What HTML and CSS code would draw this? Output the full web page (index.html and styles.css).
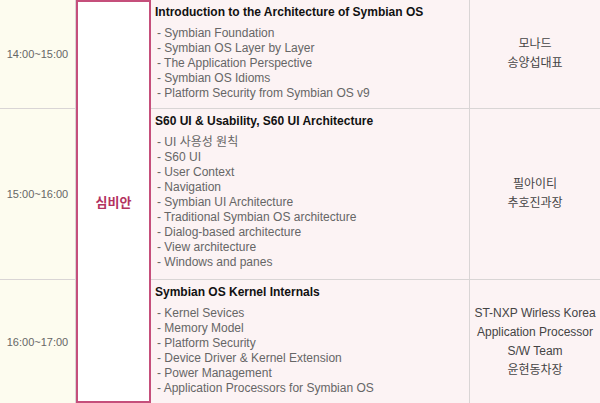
FILE: index.html
```html
<!DOCTYPE html>
<html lang="ko">
<head>
<meta charset="utf-8">
<title>Schedule</title>
<link rel="stylesheet" href="styles.css">
</head>
<body>
<table class="schedule">
  <colgroup>
    <col class="c-time">
    <col class="c-room">
    <col class="c-topic">
    <col class="c-speaker">
  </colgroup>
  <tbody>
    <tr>
      <td class="time">14:00~15:00</td>
      <td class="room" rowspan="3">심비안</td>
      <td class="topic">
        <div class="title">Introduction to the Architecture of Symbian OS</div>
        <ul class="items">
          <li>- Symbian Foundation</li>
          <li>- Symbian OS Layer by Layer</li>
          <li>- The Application Perspective</li>
          <li>- Symbian OS Idioms</li>
          <li>- Platform Security from Symbian OS v9</li>
        </ul>
      </td>
      <td class="speaker">모나드<br>송양섭대표</td>
    </tr>
    <tr>
      <td class="time">15:00~16:00</td>
      <td class="topic topic-long">
        <div class="title">S60 UI &amp; Usability, S60 UI Architecture</div>
        <ul class="items">
          <li>- UI 사용성 원칙</li>
          <li>- S60 UI</li>
          <li>- User Context</li>
          <li>- Navigation</li>
          <li>- Symbian UI Architecture</li>
          <li>- Traditional Symbian OS architecture</li>
          <li>- Dialog-based architecture</li>
          <li>- View architecture</li>
          <li>- Windows and panes</li>
        </ul>
      </td>
      <td class="speaker">필아이티<br>추호진과장</td>
    </tr>
    <tr>
      <td class="time">16:00~17:00</td>
      <td class="topic">
        <div class="title">Symbian OS Kernel Internals</div>
        <ul class="items">
          <li>- Kernel Sevices</li>
          <li>- Memory Model</li>
          <li>- Platform Security</li>
          <li>- Device Driver &amp; Kernel Extension</li>
          <li>- Power Management</li>
          <li>- Application Processors for Symbian OS</li>
        </ul>
      </td>
      <td class="speaker">ST-NXP Wirless Korea<br>Application Processor<br>S/W Team<br>윤현동차장</td>
    </tr>
  </tbody>
</table>
</body>
</html>
```

FILE: styles.css
```css
html, body {
  margin: 0;
  padding: 0;
  background: #ffffff;
}

body {
  font-family: "Liberation Sans", "Noto Sans CJK KR", sans-serif;
  font-size: 12px;
  color: #555555;
}

.schedule {
  border-collapse: separate;
  border-spacing: 0;
  width: 600px;
  table-layout: fixed;
}

.c-time { width: 76px; }
.c-room { width: 75px; }
.c-topic { width: 319px; }
.c-speaker { width: 130px; }

.schedule td {
  padding: 0;
  vertical-align: middle;
}

.time {
  background: #fdfcef;
  border-right: 1px solid #d9d5d5;
  border-bottom: 1px solid #d9d5d5;
  text-align: center;
  color: #666666;
  font-size: 11px;
}

.room {
  background: #ffffff;
  border: 2px solid #c54f7b;
  text-align: center;
  color: #b3325f;
  font-weight: bold;
  font-size: 13px;
}

.schedule .topic {
  background: #fcf3f4;
  border-right: 1px solid #d9d5d5;
  border-bottom: 1px solid #d9d5d5;
  padding: 5px 4px 7px 4px;
  vertical-align: top;
}

.schedule .topic-long {
  padding-bottom: 9px;
}

.title {
  font-weight: bold;
  color: #111111;
  line-height: 15px;
  margin-bottom: 6px;
}

.items {
  list-style: none;
  margin: 0;
  padding: 0 0 0 2px;
  line-height: 15px;
  color: #666666;
}

.topic-long .items li + li {
  margin-top: 0;
}

.speaker {
  background: #fcf3f4;
  border-bottom: 1px solid #d9d5d5;
  text-align: center;
  line-height: 19px;
  color: #444444;
}

.schedule tr:last-child .time,
.schedule tr:last-child .topic,
.schedule tr:last-child .speaker {
  border-bottom: none;
}
```
